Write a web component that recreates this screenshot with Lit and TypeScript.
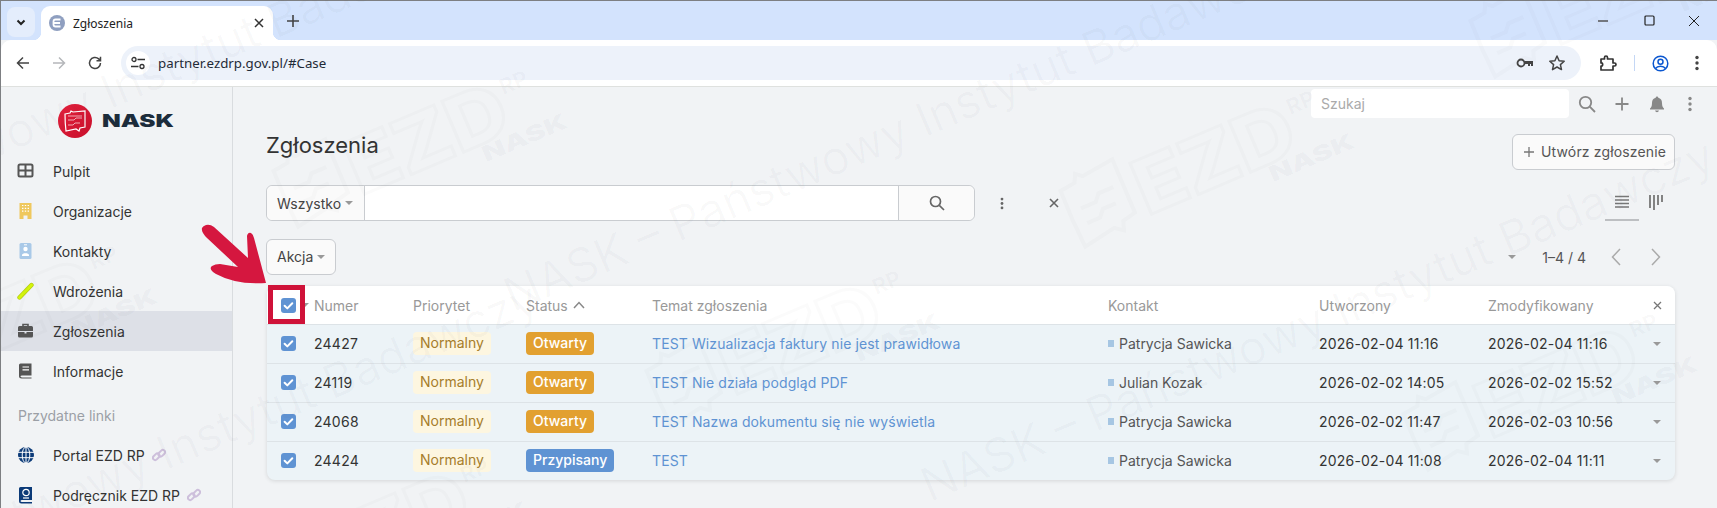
import { LitElement, html, css, svg } from "lit";
import { customElement } from "lit/decorators.js";

const ROWS = [
  { id: "24427", status: "Otwarty", subject: "TEST Wizualizacja faktury nie jest prawidłowa", who: "Patrycja Sawicka", created: "2026-02-04 11:16", changed: "2026-02-04 11:16" },
  { id: "24119", status: "Otwarty", subject: "TEST Nie działa podgląd PDF", who: "Julian Kozak", created: "2026-02-02 14:05", changed: "2026-02-02 15:52" },
  { id: "24068", status: "Otwarty", subject: "TEST Nazwa dokumentu się nie wyświetla", who: "Patrycja Sawicka", created: "2026-02-02 11:47", changed: "2026-02-03 10:56" },
  { id: "24424", status: "Przypisany", subject: "TEST", who: "Patrycja Sawicka", created: "2026-02-04 11:08", changed: "2026-02-04 11:11" },
];

const LOGOS = [[314, 178], [1101, 198], [1444, 421], [1511, 28], [-96, 353], [687, 378], [275, 566]];
const LINES = [[515, 318], [932, 508], [-300, 290], [-244, 651]];

const check = html`<svg class="tick" viewBox="0 0 15 15"><path d="M3.6 7.8l2.7 2.6 5-5.2" fill="none" stroke="#fff" stroke-width="2" stroke-linecap="round" stroke-linejoin="round"/></svg>`;
const caret = html`<span class="caret"></span>`;

const NAV = [
  { label: "Pulpit", icon: svg`<rect x="1.5" y="2.5" width="14" height="12" rx="1.5" fill="none" stroke="#555" stroke-width="2"/><path d="M8.5 3v11M2 8.5h13" stroke="#555" stroke-width="2"/>` },
  { label: "Organizacje", icon: svg`<path d="M2.5 1h12v16H10.500v-3.500h-4V17h-4z" fill="#efc85e"/><path d="M5 3.500h1.400M7.800 3.500h1.400M10.600 3.500h1.400M5 6.300h1.400M7.800 6.300h1.400M10.600 6.300h1.400M5 9.100h1.400M7.800 9.100h1.400M10.600 9.100h1.400" stroke="#fff" stroke-width="1.200"/>` },
  { label: "Kontakty", icon: svg`<rect x="2.5" y="1" width="12" height="16" rx="1.5" fill="#a9c9e8"/><circle cx="8.5" cy="7" r="2.2" fill="#fff"/><path d="M5 13c0-2.4 7-2.4 7 0v1H5z" fill="#fff"/><path d="M7 2.8h3" stroke="#fff" stroke-width="1"/>` },
  { label: "Wdrożenia", icon: svg`<path d="M2.5 15.5L14.5 3" stroke="#b5cc10" stroke-width="4.4" stroke-linecap="round"/><path d="M2.5 15.5L14.5 3" stroke="#d4f50a" stroke-width="3" stroke-linecap="round"/>` },
  { label: "Zgłoszenia", active: true, icon: svg`<path d="M6 4V2.5h5V4" fill="none" stroke="#555" stroke-width="1.6"/><path d="M1 5.5q0-1.5 1.5-1.5h12q1.5 0 1.5 1.5V9H1zM1 10h6.5v1.4h2V10H16v4q0 1.5-1.5 1.5h-12Q1 15.5 1 14z" fill="#555"/>` },
  { label: "Informacje", icon: svg`<path d="M3.5 1.500h11v12H5q-1.500 0-1.500 1s.5 1 1.500 1h9.500v1H4.500Q2 16.500 2 14.500V3q0-1.500 1.500-1.500z" fill="#555"/><path d="M5.500 5h6.500M5.500 7.800h6.500" stroke="#fff" stroke-width="1.200"/>` },
];

const linkIcon = html`<svg class="chain" viewBox="0 0 14 14"><g fill="none" stroke="#cdbfdb" stroke-width="2"><rect x="0.500" y="6.500" width="7.500" height="4.500" rx="2.250" transform="rotate(-45 4.250 8.750)"/><rect x="6" y="3" width="7.500" height="4.500" rx="2.250" transform="rotate(-45 9.750 5.250)"/></g></svg>`;

@customElement("app-root")
export class AppRoot extends LitElement {
  static styles = css`
    :host { display: block; position: relative; width: 1717px; height: 508px; overflow: hidden; background: #f1f3f5; font-family: Inter, "Noto Sans", sans-serif; font-size: 14px; color: #333; }
    * { box-sizing: border-box; }
    svg { display: block; flex: none; }
    .frame { display: flex; flex-direction: column; height: 508px; border-left: 1px solid #7d7f82; border-top: 1px solid #7d7f82; }

    .tabstrip { height: 39px; background: #d3e3fd; display: flex; align-items: flex-start; padding: 5px 0 0 6px; flex: none; font-family: "Noto Sans", sans-serif; }
    .tabs-btn { width: 28px; height: 30px; margin-top: 1px; border-radius: 8px; background: #e4edfc; display: flex; align-items: center; justify-content: center; }
    .tab { position: relative; width: 232px; height: 34px; margin-left: 6px; background: #fff; border-radius: 9px 9px 0 0; display: flex; align-items: center; padding: 0 9px 0 8px; font-size: 12px; color: #222; }
    .tab::before, .tab::after { content: ""; position: absolute; bottom: 0; width: 8px; height: 8px; }
    .tab::before { left: -8px; background: radial-gradient(circle at 0 0, transparent 8px, #fff 8.500px); }
    .tab::after { right: -8px; background: radial-gradient(circle at 100% 0, transparent 8px, #fff 8.500px); }
    .favicon { margin-right: 8px; }
    .tab-title { flex: 1; }
    .new-tab { margin: 9px 0 0 14px; }
    .win { margin-left: auto; display: flex; gap: 32px; padding: 9px 17px 0 0; }

    .toolbar { height: 46px; flex: none; background: #fff; border-radius: 10px 10px 0 0; display: flex; align-items: center; padding: 0 0 0 14px; font-family: "Noto Sans", sans-serif; }
    .nav-btns { display: flex; gap: 20px; width: 106px; }
    .omni { width: 1460px; height: 34px; border-radius: 17px; background: #edf2fa; display: flex; align-items: center; padding: 0 15px 0 5px; }
    .tune { width: 24px; height: 24px; border-radius: 50%; background: #fff; display: flex; align-items: center; justify-content: center; margin-right: 8px; }
    .url { flex: 1; font-size: 13.300px; color: #1f2a37; }
    .omni-icons { display: flex; gap: 14px; align-items: center; }
    .tools { display: flex; align-items: center; margin-left: 18px; }
    .divider { width: 1px; height: 16px; background: #c4d7f5; margin: 0 17px 0 17px; }

    .page { flex: 1; display: flex; min-height: 0; border-top: 1px solid #dfe1df; }
    .side { width: 232px; flex: none; border-right: 1px solid #d9dcdf; padding-top: 16px; }
    .brand { display: flex; align-items: center; height: 36px; padding-left: 57px; gap: 10px; margin-bottom: 12px; }
    .item { height: 40px; display: flex; align-items: center; padding-left: 16px; gap: 18px; color: #333; }
    .item.active { background: #dde0e7; }
    .item svg.ic { width: 18px; height: 18px; }
    .side-label { height: 30px; margin-top: 7px; padding: 9px 0 0 17px; color: #9b9fa6; font-size: 14px; }
    .chain { width: 14px; height: 14px; margin-left: -11px; }
    .side-links { padding-top: 7px; }

    .main { flex: 1; min-width: 0; padding: 2px 42px 0 33px; display: flex; flex-direction: column; }
    .topbar { display: flex; align-items: center; justify-content: flex-end; margin-right: -17px; height: 29px; }
    .find { width: 258px; height: 29px; background: #fff; border-radius: 4px; color: #aaa; padding: 6px 10px; margin-right: 9px; line-height: 17px; }
    .top-icons { display: flex; align-items: center; gap: 18px; }
    .head { display: flex; align-items: flex-end; justify-content: space-between; height: 52px; }
    .head h1 { margin: 0 0 10px; font-weight: 400; font-size: 22px; line-height: 30px; color: #333; }
    .btn { height: 36px; border: 1px solid #c9ccd0; border-radius: 6px; background: #fafafa; display: inline-flex; align-items: center; color: #555; padding: 0 10px; line-height: 1; }
    .create { width: 163px; gap: 6px; letter-spacing: 0.15px; white-space: nowrap; }
    .filter { display: flex; align-items: center; margin-top: 15px; height: 36px; }
    .group { width: 709px; height: 36px; display: flex; background: #fff; border: 1px solid #c9ccd0; border-radius: 6px; }
    .group .scope { width: 98px; display: flex; align-items: center; padding-left: 10px; gap: 4px; border-right: 1px solid #c9ccd0; background: #fafafa; border-radius: 6px 0 0 6px; color: #444; }
    .group .q { flex: 1; }
    .group .go { width: 76px; display: flex; align-items: center; justify-content: center; border-left: 1px solid #c9ccd0; background: #fafafa; border-radius: 0 6px 6px 0; }
    .more { margin-left: 25px; }
    .clear { margin-left: 45px; }
    .views { margin-left: auto; display: flex; align-items: flex-start; height: 36px; padding-right: 2px; }
    .view { width: 34px; height: 36px; display: flex; justify-content: center; padding-top: 9px; border-bottom: 2px solid #bdbfc2; }
    .view.plain { border-bottom: 0; width: 34px; }
    .caret { display: inline-block; width: 0; height: 0; border-left: 4px solid transparent; border-right: 4px solid transparent; border-top: 4px solid #999; flex: none; }
    .actions { display: flex; align-items: center; margin-top: 18px; height: 36px; }
    .akcja { width: 70px; gap: 4px; color: #444; }
    .pager { margin-left: auto; display: flex; align-items: center; color: #555; padding-right: 14px; }
    .count { margin: 0 25px 0 26px; font-size: 14px; }
    .pager .gap { margin-left: 30px; }

    .table { position: relative; margin: 11px 0 0 1px; border-radius: 8px; background: #ecf3f7; box-shadow: 0 1px 4px rgba(0,0,0,.12); }
    .row { display: grid; grid-template-columns: 47px 99px 113px 126px 456px 211px 169px 155px 32px; align-items: center; height: 39px; border-top: 1px solid #dde3e7; padding-bottom: 1px; }
    .row.header { height: 38px; background: #fff; color: #999; border-top: 0; border-radius: 8px 8px 0 0; padding-bottom: 0; }
    .row > .c0 { padding-left: 14px; display: flex; align-items: center; gap: 5px; }
    .box { width: 15px; height: 15px; border-radius: 3px; background: #5f93d3; flex: none; }
    .tick { width: 15px; height: 15px; }
    .num { letter-spacing: 0.250px; }
    .pill { display: inline-block; height: 23px; line-height: 22px; padding: 0 7px; border-radius: 4px; }
    .prio { background: #fdf6e0; color: #a67d2a; }
    .stat { color: #fff; font-weight: 500; }
    .stat.o { background: #e2a030; }
    .stat.p { background: #5f93d3; }
    .subj { color: #5f93d3; white-space: nowrap; letter-spacing: 0.100px; }
    .who { display: flex; align-items: center; gap: 5px; color: #555; white-space: nowrap; }
    .who i { width: 6px; height: 7px; background: #a6c6e3; }
    .date { color: #333; white-space: nowrap; letter-spacing: 0.200px; }
    .end { display: flex; padding-left: 10px; color: #777; }
    .status-h { display: flex; align-items: center; gap: 5px; }
    .mark { position: absolute; left: 1px; top: -1px; width: 37px; height: 39px; border: 5px solid #cf1239; }
    .arrow { position: absolute; left: 195px; top: 215px; }

    .wm { position: absolute; inset: 0; pointer-events: none; overflow: hidden; }
    .wm-line { position: absolute; white-space: nowrap; font-size: 47px; font-weight: 400; color: rgba(70,80,90,.028); transform-origin: 0 100%; transform: rotate(-23deg); line-height: 1; font-family: Inter, sans-serif; }
    .wm-logo { position: absolute; width: 300px; height: 110px; transform-origin: 0 100%; transform: rotate(-23deg); }
    .wm-logo text { font-family: Inter, sans-serif; }
  `;

  private logo() {
    return html`<svg width="34" height="34" viewBox="0 0 34 34">
      <defs><linearGradient id="lg" x1="0" y1="0" x2="1" y2="1"><stop offset="0" stop-color="#e2203c"/><stop offset="1" stop-color="#c80f2b"/></linearGradient></defs>
      <circle cx="17" cy="17" r="17" fill="url(#lg)"/>
      <path d="M7 10l5-1 1-2 2 1 12-1v16l-5 1-1 3-3-2-10 2q-1-8-1-17z" fill="none" stroke="#fff" stroke-width="1.200"/>
      <path d="M10 16h6l2-2h6M10 21h5l2-2h5M10 12h14" fill="none" stroke="#fff" stroke-width="0.800" opacity=".8"/>
    </svg>
    <svg width="73" height="16" viewBox="0 0 73 16"><text x="0" y="14" font-family="Inter, sans-serif" font-weight="900" font-size="17" fill="#1c2c3b" textLength="72" lengthAdjust="spacingAndGlyphs">NASK</text></svg>`;
  }

  private watermark() {
    return html`<div class="wm">
      ${LINES.map(([x, y]) => html`<div class="wm-line" style="left:${x}px;top:${y - 47}px">NASK – Państwowy Instytut Badawczy</div>`)}
      ${LOGOS.map(([x, y]) => html`<svg class="wm-logo" style="left:${x - 10}px;top:${y - 30}px" viewBox="0 0 300 110">
        <g fill="none" stroke="rgba(70,80,90,.024)" stroke-width="4">
          <path d="M6 18l16-2 4-8 6 5 34-4v58l-14 3-3 9-8-6-34 6q-2-30-1-61z"/>
          <path d="M18 42h16l6-7h16M18 58h14l6-7h14"/>
          <text x="76" y="75" font-size="76" font-weight="800" stroke-width="3" textLength="168" lengthAdjust="spacingAndGlyphs">EZD</text>
        </g>
        <text x="247" y="38" font-size="22" font-weight="800" fill="rgba(70,80,90,.028)">RP</text>
        <text x="205" y="93" font-size="22" font-weight="900" fill="rgba(70,80,90,.04)" textLength="90" lengthAdjust="spacingAndGlyphs">NASK</text>
      </svg>`)}
    </div>`;
  }

  render() {
    const dots = (c: string, h = 16) => html`<svg width="4" height=${h} viewBox="0 0 4 16"><circle cx="2" cy="2.500" r="1.700" fill=${c}/><circle cx="2" cy="8" r="1.700" fill=${c}/><circle cx="2" cy="13.500" r="1.700" fill=${c}/></svg>`;
    return html`
      <div class="frame">
        <div class="tabstrip">
          <div class="tabs-btn"><svg width="12" height="12" viewBox="0 0 12 12"><path d="M2.500 4.500L6 8l3.500-3.500" fill="none" stroke="#222" stroke-width="2"/></svg></div>
          <div class="tab">
            <svg class="favicon" width="16" height="16" viewBox="0 0 16 16"><circle cx="8" cy="8" r="8" fill="#8f9fc0"/><path d="M11.500 4.500H6.500Q4.500 4.500 4.500 6.500V9.500Q4.500 11.500 6.500 11.500H11.500M5 8H11" fill="none" stroke="#fff" stroke-width="1.800"/></svg>
            <span class="tab-title">Zgłoszenia</span>
            <svg width="10" height="10" viewBox="0 0 10 10"><path d="M1 1l8 8M9 1L1 9" stroke="#333" stroke-width="1.500"/></svg>
          </div>
          <svg class="new-tab" width="12" height="12" viewBox="0 0 12 12"><path d="M6 0v12M0 6h12" stroke="#444" stroke-width="1.600"/></svg>
          <div class="win">
            <svg width="16" height="12" viewBox="0 0 16 12"><path d="M2 6h10" stroke="#555" stroke-width="1.500"/></svg>
            <svg width="12" height="12" viewBox="0 0 12 12"><rect x="1" y="1" width="9" height="9" rx="1" fill="none" stroke="#222" stroke-width="1.200"/></svg>
            <svg width="12" height="12" viewBox="0 0 12 12"><path d="M1 1l10 10M11 1L1 11" stroke="#222" stroke-width="1"/></svg>
          </div>
        </div>
        <div class="toolbar">
          <div class="nav-btns">
            <svg width="16" height="16" viewBox="0 0 16 16"><path d="M14 8H2.500M8 2.500L2.500 8 8 13.500" fill="none" stroke="#444" stroke-width="1.500"/></svg>
            <svg width="16" height="16" viewBox="0 0 16 16"><path d="M2 8h11.500M8 2.500L13.500 8 8 13.500" fill="none" stroke="#b5b7ba" stroke-width="1.500"/></svg>
            <svg width="16" height="16" viewBox="0 0 16 16"><path d="M13.500 8A5.500 5.500 0 1 1 11.700 3.900L13.500 5.700M13.500 1.800v4h-4" fill="none" stroke="#444" stroke-width="1.500"/></svg>
          </div>
          <div class="omni">
            <div class="tune"><svg width="14" height="14" viewBox="0 0 14 14"><circle cx="3" cy="3.500" r="2" fill="none" stroke="#333" stroke-width="1.300"/><path d="M6.500 3.500H14M0 10.500h7.500" stroke="#333" stroke-width="1.300"/><circle cx="11" cy="10.500" r="2" fill="none" stroke="#333" stroke-width="1.300"/></svg></div>
            <span class="url">partner.ezdrp.gov.pl/#Case</span>
            <div class="omni-icons">
              <svg width="18" height="18" viewBox="0 0 18 18"><circle cx="5" cy="9" r="3.500" fill="none" stroke="#444" stroke-width="1.800"/><path d="M8.500 7H17V12h-2V10h-1V12h-2V10H8.500z" fill="#444"/></svg>
              <svg width="18" height="18" viewBox="0 0 18 18"><path d="M9 2l2.100 4.700 5.100.5-3.800 3.400 1.100 5L9 13l-4.500 2.600 1.100-5L1.800 7.200l5.100-.5z" fill="none" stroke="#444" stroke-width="1.500" stroke-linejoin="round"/></svg>
            </div>
          </div>
          <div class="tools">
            <svg width="18" height="18" viewBox="0 0 18 18"><path d="M2 5h3.500V3.500a1.500 1.500 0 0 1 3 0V5H14v4h1.500a1.500 1.500 0 0 1 0 3H14v4H2v-4h1a2 2 0 0 0 0-3H2z" fill="none" stroke="#333" stroke-width="1.700" stroke-linejoin="round"/></svg>
            <div class="divider"></div>
            <svg width="17" height="17" viewBox="0 0 17 17"><circle cx="8.500" cy="8.500" r="7.300" fill="none" stroke="#0b57d0" stroke-width="1.500"/><circle cx="8.500" cy="6.800" r="2.500" fill="none" stroke="#0b57d0" stroke-width="1.500"/><path d="M3.500 13.500c2-3 8-3 10 0" fill="none" stroke="#0b57d0" stroke-width="1.500"/></svg>
            <span style="margin-left:26px">${dots("#444")}</span>
          </div>
        </div>
        <div class="page">
          <aside class="side">
            <div class="brand">${this.logo()}</div>
            ${NAV.map((n) => html`<div class="item ${n.active ? "active" : ""}"><svg class="ic" viewBox="0 0 18 18">${n.icon}</svg><span>${n.label}</span></div>`)}
            <div class="side-label">Przydatne linki</div>
            <div class="side-links">
              <div class="item"><svg class="ic" viewBox="0 0 18 18"><circle cx="9" cy="9" r="8" fill="#0b3a78"/><path d="M1 6.300h16M1 11.700h16M9 1v16" stroke="#fff" stroke-width="1"/><ellipse cx="9" cy="9" rx="3.800" ry="8" fill="none" stroke="#fff" stroke-width="1"/></svg><span>Portal EZD RP</span>${linkIcon}</div>
              <div class="item"><svg class="ic" viewBox="0 0 18 18"><path d="M3.500 1h11.500v13H5q-1.500 0-1.500 1t1.500 1h10v1.500H4.500Q2 17.500 2 15V2.500Q2 1 3.500 1z" fill="#0b3a78"/><circle cx="9" cy="6.500" r="3.200" fill="none" stroke="#fff" stroke-width="1.200"/><path d="M6 12h6" stroke="#fff" stroke-width="1.200"/></svg><span>Podręcznik EZD RP</span>${linkIcon}</div>
            </div>
          </aside>
          <main class="main">
            <div class="topbar">
              <div class="find">Szukaj</div>
              <div class="top-icons">
                <svg width="18" height="18" viewBox="0 0 18 18"><circle cx="7.500" cy="7.500" r="5.700" fill="none" stroke="#888" stroke-width="1.800"/><path d="M11.700 11.700L17 17" stroke="#888" stroke-width="1.800"/></svg>
                <svg width="16" height="16" viewBox="0 0 16 16"><path d="M8 1.500v13M1.500 8h13" stroke="#888" stroke-width="1.800"/></svg>
                <svg width="18" height="18" viewBox="0 0 18 18"><path d="M9 1.500q1.200 0 1.300 1.300Q14 3.800 14 8c0 3.500 1 4.500 2 5.500v1H2v-1c1-1 2-2 2-5.500Q4 3.800 7.700 2.800 7.800 1.500 9 1.500zM7 15.500h4q-.5 1.800-2 1.800t-2-1.800z" fill="#888"/></svg>
                <span style="margin-left:4px">${dots("#888")}</span>
              </div>
            </div>
            <div class="head">
              <h1>Zgłoszenia</h1>
              <div class="btn create"><svg width="12" height="12" viewBox="0 0 12 12"><path d="M6 1v10M1 6h10" stroke="#777" stroke-width="1.300"/></svg><span>Utwórz zgłoszenie</span></div>
            </div>
            <div class="filter">
              <div class="group">
                <div class="scope"><span>Wszystko</span>${caret}</div>
                <div class="q"></div>
                <div class="go"><svg width="16" height="16" viewBox="0 0 16 16"><circle cx="6.500" cy="6.500" r="5" fill="none" stroke="#666" stroke-width="1.700"/><path d="M10.300 10.300L15 15" stroke="#666" stroke-width="1.700"/></svg></div>
              </div>
              <span class="more">${dots("#666", 13)}</span>
              <svg class="clear" width="10" height="10" viewBox="0 0 10 10"><path d="M1 1l8 8M9 1L1 9" stroke="#666" stroke-width="1.600"/></svg>
              <div class="views">
                <div class="view"><svg width="16" height="16" viewBox="0 0 16 16"><path d="M1 2.500h14M1 6h14M1 9.500h14M1 13h14" stroke="#777" stroke-width="1.500"/></svg></div>
                <div class="view plain"><svg width="16" height="16" viewBox="0 0 16 16"><path d="M2 1v13M6 1v15M10 1v10M14 1v7" stroke="#777" stroke-width="1.800"/></svg></div>
              </div>
            </div>
            <div class="actions">
              <div class="btn akcja"><span>Akcja</span>${caret}</div>
              <div class="pager">
                ${caret}
                <span class="count">1–4 / 4</span>
                <svg width="10" height="18" viewBox="0 0 10 18"><path d="M9 1L1.500 9 9 17" fill="none" stroke="#aaa" stroke-width="1.500"/></svg>
                <svg class="gap" width="10" height="18" viewBox="0 0 10 18"><path d="M1 1l7.500 8L1 17" fill="none" stroke="#aaa" stroke-width="1.500"/></svg>
              </div>
            </div>
            <div class="table">
              <div class="row header">
                <div class="c0"><span class="box">${check}</span>${caret}</div>
                <div>Numer</div><div>Priorytet</div>
                <div class="status-h">Status <svg width="12" height="8" viewBox="0 0 12 8"><path d="M1 7l5-5.500L11 7" fill="none" stroke="#888" stroke-width="1.500"/></svg></div>
                <div>Temat zgłoszenia</div><div>Kontakt</div><div>Utworzony</div><div>Zmodyfikowany</div>
                <div class="end"><svg width="9" height="9" viewBox="0 0 9 9"><path d="M1 1l7 7M8 1L1 8" stroke="#777" stroke-width="1.300"/></svg></div>
              </div>
              ${ROWS.map((r) => html`<div class="row">
                <div class="c0"><span class="box">${check}</span></div>
                <div class="num">${r.id}</div>
                <div><span class="pill prio">Normalny</span></div>
                <div><span class="pill stat ${r.status === "Otwarty" ? "o" : "p"}">${r.status}</span></div>
                <div class="subj">${r.subject}</div>
                <div class="who"><i></i>${r.who}</div>
                <div class="date">${r.created}</div>
                <div class="date">${r.changed}</div>
                <div class="end">${caret}</div>
              </div>`)}
              <div class="mark"></div>
            </div>
          </main>
        </div>
      </div>
      ${this.watermark()}
      <svg class="arrow" width="75" height="72" viewBox="195 215 75 72"><path d="M206 225Q210 224 214 227L248 258 L247 236Q248 232 251 233 253 234 254 238L266 283Q236 285 216 274 208 269 212 266 215 264 220 264L238 267 207 238Q201 232 202 228 203 226 206 225z" fill="#d5173f"/></svg>
    `;
  }
}
